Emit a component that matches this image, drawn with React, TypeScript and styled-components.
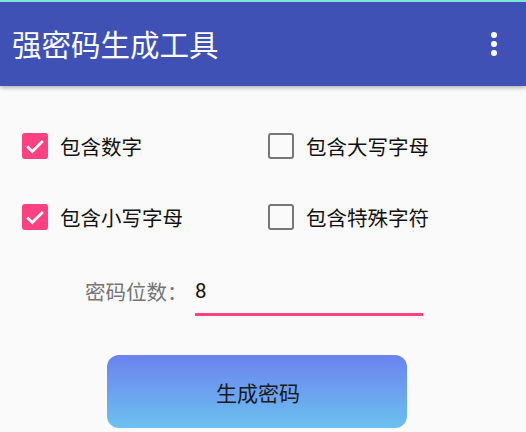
import styled, { createGlobalStyle } from "styled-components";

const Global = createGlobalStyle`
  html, body {
    margin: 0;
    padding: 0;
    background-color: #fafafa;
  }
  body {
    font-family: "Noto Sans CJK SC", "Roboto", sans-serif;
  }
`;

const Screen = styled.div`
  width: 526px;
  height: 432px;
  overflow: hidden;
  background-color: #fafafa;
  border-top: 2px solid #80e3dd;
  box-sizing: border-box;
`;

const AppBar = styled.div`
  height: 84px;
  background-color: #3f51b5;
  display: flex;
  align-items: center;
  justify-content: space-between;
  padding: 0 29px 0 12px;
  box-shadow: 0 2px 4px rgba(0, 0, 0, 0.28);
  position: relative;
`;

const Title = styled.h1`
  margin: 0;
  color: #ffffff;
  font-size: 29.5px;
  font-weight: 400;
  margin-top: -2px;
`;

const Menu = styled.div`
  display: flex;
  flex-direction: column;
  gap: 3px;
`;

const Dot = styled.span`
  width: 6px;
  height: 6px;
  border-radius: 50%;
  background-color: #ffffff;
`;

const Options = styled.div`
  display: grid;
  grid-template-columns: 246px 1fr;
  row-gap: 45px;
  padding: 47px 0 0 22px;
`;

const Option = styled.label`
  display: flex;
  align-items: center;
  gap: 12px;
  font-size: 20.5px;
  color: #111111;
  height: 26px;
`;

const Box = styled.span<{ $checked: boolean }>`
  width: 26px;
  height: 26px;
  box-sizing: border-box;
  border-radius: 3px;
  display: flex;
  align-items: center;
  justify-content: center;
  background-color: ${(p) => (p.$checked ? "#ff4081" : "transparent")};
  border: ${(p) => (p.$checked ? "none" : "2.5px solid #777777")};
`;

const LengthRow = styled.div`
  display: flex;
  align-items: flex-start;
  padding: 46px 0 0 85px;
`;

const LengthLabel = styled.span`
  font-size: 20.5px;
  color: #757575;
  line-height: 30px;
  width: 110px;
`;

const LengthInput = styled.div`
  width: 228px;
  height: 37px;
  border-bottom: 3px solid #ff4081;
  font-family: "Roboto", sans-serif;
  font-size: 20.5px;
  color: #111111;
  line-height: 30px;
`;

const ButtonWrap = styled.div`
  display: flex;
  justify-content: flex-start;
  padding: 39px 0 0 107px;
`;

const Generate = styled.button`
  width: 300px;
  height: 73px;
  border: none;
  border-radius: 12px;
  background: linear-gradient(to bottom, #6b82ef, #6cc1f0);
  font-family: "Noto Sans CJK SC", sans-serif;
  font-size: 21px;
  color: #1a1a1a;
  padding: 0 0 0 2px;
`;

const options = [
  { label: "包含数字", checked: true },
  { label: "包含大写字母", checked: false },
  { label: "包含小写字母", checked: true },
  { label: "包含特殊字符", checked: false },
];

function Check() {
  return (
    <svg width="22" height="22" viewBox="0 0 24 24">
      <path
        d="M3.5 12.5l5.5 5.5L20.5 6.5"
        fill="none"
        stroke="#ffffff"
        strokeWidth="3"
      />
    </svg>
  );
}

export default function App() {
  return (
    <>
      <Global />
      <Screen>
        <AppBar>
          <Title>强密码生成工具</Title>
          <Menu>
            <Dot />
            <Dot />
            <Dot />
          </Menu>
        </AppBar>
        <Options>
          {options.map((o) => (
            <Option key={o.label}>
              <Box $checked={o.checked}>{o.checked ? <Check /> : null}</Box>
              {o.label}
            </Option>
          ))}
        </Options>
        <LengthRow>
          <LengthLabel>密码位数：</LengthLabel>
          <LengthInput>8</LengthInput>
        </LengthRow>
        <ButtonWrap>
          <Generate>生成密码</Generate>
        </ButtonWrap>
      </Screen>
    </>
  );
}
